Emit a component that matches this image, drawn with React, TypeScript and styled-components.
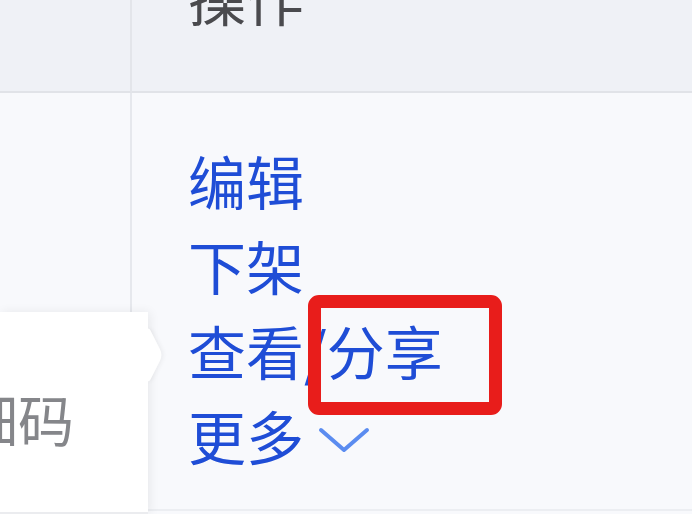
import styled, { createGlobalStyle } from "styled-components";

const GlobalStyle = createGlobalStyle`
  html, body {
    margin: 0;
    padding: 0;
    background: #f8f9fc;
    overflow: hidden;
  }
  body {
    font-family: "Noto Sans CJK SC", "Noto Sans", sans-serif;
  }
`;

const Page = styled.div`
  position: relative;
  width: 692px;
  height: 514px;
  overflow: hidden;
  background: #f8f9fc;
`;

const Table = styled.div`
  display: grid;
  grid-template-columns: 132px 1fr;
  grid-template-rows: 93px 418px;
`;

const HeadCell = styled.div<{ first?: boolean }>`
  background: #eff1f6;
  border-bottom: 2px solid #e1e3e8;
  border-right: ${({ first }) => (first ? "2px solid #e3e5ea" : "none")};
  padding-left: 56px;
  overflow: hidden;
`;

const HeadText = styled.div`
  margin-top: -33px;
  font-size: 58px;
  line-height: 58px;
  color: #4a4a4e;
`;

const BodyCell = styled.div<{ first?: boolean }>`
  border-right: ${({ first }) => (first ? "2px solid #e6e8ed" : "none")};
  border-bottom: 2px solid #eceef2;
`;

const ActionList = styled.div`
  display: flex;
  flex-direction: column;
  padding: 45px 0 0 56px;
`;

const ActionLink = styled.a`
  display: flex;
  align-items: center;
  height: 85px;
  font-size: 58px;
  line-height: 85px;
  color: #1f4dd6;
  text-decoration: none;
  cursor: pointer;
`;

const Chevron = styled.svg`
  width: 52px;
  height: 28px;
  margin-left: 14px;
  margin-top: 8px;
`;

const Popover = styled.div`
  position: absolute;
  left: 0;
  top: 312px;
  width: 148px;
  height: 200px;
  background: rgba(255, 255, 255, 0.94);
  box-shadow: 2px 0 10px rgba(0, 0, 0, 0.07);
  border-bottom: 2px solid #ebecef;
`;

const PopoverArrow = styled.div`
  position: absolute;
  right: -21px;
  top: 22px;
  width: 42px;
  height: 42px;
  background: #ffffff;
  transform: scaleX(0.5) rotate(45deg);
  border-radius: 8px;
  box-shadow: 3px -3px 6px rgba(0, 0, 0, 0.05);
`;

const PopoverBody = styled.div`
  position: relative;
  height: 100%;
  overflow: hidden;
  background: rgba(255, 255, 255, 0.94);
`;

const PopoverText = styled.div`
  position: absolute;
  left: -38px;
  top: 76px;
  font-size: 56px;
  line-height: 60px;
  color: #85868a;
  white-space: nowrap;
`;

const Highlight = styled.div`
  position: absolute;
  left: 308px;
  top: 295px;
  width: 194px;
  height: 120px;
  box-sizing: border-box;
  border: 13px solid #e81d1b;
  border-radius: 11px;
`;

const actions = ["编辑", "下架", "查看/分享"];

export default function App() {
  return (
    <Page>
      <GlobalStyle />
      <Table>
        <HeadCell first />
        <HeadCell>
          <HeadText>操作</HeadText>
        </HeadCell>
        <BodyCell first />
        <BodyCell>
          <ActionList>
            {actions.map((a) => (
              <ActionLink key={a}>{a}</ActionLink>
            ))}
            <ActionLink>
              更多
              <Chevron viewBox="0 0 52 28">
                <polyline
                  points="3,4 26,24 49,4"
                  fill="none"
                  stroke="#5b8cf0"
                  strokeWidth="4"
                  strokeLinecap="round"
                  strokeLinejoin="round"
                />
              </Chevron>
            </ActionLink>
          </ActionList>
        </BodyCell>
      </Table>
      <Popover>
        <PopoverArrow />
        <PopoverBody>
          <PopoverText>细码</PopoverText>
        </PopoverBody>
      </Popover>
      <Highlight />
    </Page>
  );
}
